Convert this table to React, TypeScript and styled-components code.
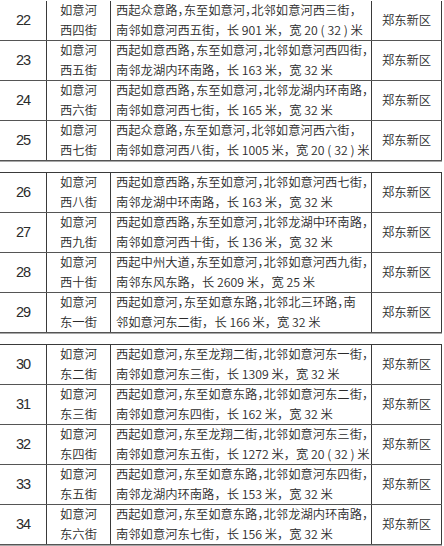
import React from 'react';
import styled, { createGlobalStyle } from 'styled-components';

const GlobalStyle = createGlobalStyle`
  html, body {
    margin: 0;
    padding: 0;
    background: #ffffff;
  }
  body {
    width: 444px;
    height: 546px;
    overflow: hidden;
    font-family: 'Noto Sans CJK SC', 'Noto Sans', sans-serif;
    color: #2b2b2b;
  }
`;

const Page = styled.div`
  display: flex;
  flex-direction: column;
  gap: 10px;
  margin-left: -1px;
  width: 443px;
`;

const Group = styled.div<{ $first?: boolean }>`
  display: flex;
  flex-direction: column;
  border-left: 1px solid #3a3a3a;
  border-top: 1px solid ${(p) => (p.$first ? 'transparent' : '#3a3a3a')};
  border-bottom: 1px solid #a8a8a8;
`;

const Row = styled.div`
  display: grid;
  grid-template-columns: 47px 64px 261px 70px;
  height: 40px;
  border-bottom: 1px solid #555;
  box-sizing: border-box;
`;

const Cell = styled.div<{ $align?: 'left' | 'center' }>`
  display: flex;
  flex-direction: column;
  justify-content: center;
  align-items: ${(p) => (p.$align === 'left' ? 'flex-start' : 'center')};
  padding-left: ${(p) => (p.$align === 'left' ? '5px' : '0')};
  border-right: 1px solid #3a3a3a;
  font-size: 12.3px;
  font-weight: 350;
  line-height: 19.5px;
  white-space: nowrap;
  overflow: hidden;
`;

const Num = styled.span`
  font-family: 'Liberation Sans', Arial, sans-serif;
  font-size: 14.5px;
  font-weight: 400;
  letter-spacing: -1px;
  padding-top: 1px;
`;

const Line = styled.span<{ $tight?: boolean }>`
  display: block;
  font-feature-settings: ${(p) => (p.$tight ? '"halt"' : 'normal')};
`;

type Road = {
  no: number;
  name: string;
  first: string;
  second: string;
};

const groups: Road[][] = [
  [
    { no: 22, name: '西四街', first: '西起众意路，东至如意河，北邻如意河西三街，', second: '南邻如意河西五街，长 901 米，宽 20 ( 32 ) 米' },
    { no: 23, name: '西五街', first: '西起如意西路，东至如意河，北邻如意河西四街，', second: '南邻龙湖内环南路，长 163 米，宽 32 米' },
    { no: 24, name: '西六街', first: '西起如意西路，东至如意河，北邻龙湖内环南路，', second: '南邻如意河西七街，长 165 米，宽 32 米' },
    { no: 25, name: '西七街', first: '西起众意路，东至如意河，北邻如意河西六街，', second: '南邻如意河西八街，长 1005 米，宽 20 ( 32 ) 米' },
  ],
  [
    { no: 26, name: '西八街', first: '西起如意西路，东至如意河，北邻如意河西七街，', second: '南邻龙湖中环南路，长 163 米，宽 32 米' },
    { no: 27, name: '西九街', first: '西起如意西路，东至如意河，北邻龙湖中环南路，', second: '南邻如意河西十街，长 136 米，宽 32 米' },
    { no: 28, name: '西十街', first: '西起中州大道，东至如意河，北邻如意河西九街，', second: '南邻东风东路，长 2609 米，宽 25 米' },
    { no: 29, name: '东一街', first: '西起如意河，东至如意东路，北邻北三环路，南', second: '邻如意河东二街，长 166 米，宽 32 米' },
  ],
  [
    { no: 30, name: '东二街', first: '西起如意河，东至龙翔二街，北邻如意河东一街，', second: '南邻如意河东三街，长 1309 米，宽 32 米' },
    { no: 31, name: '东三街', first: '西起如意河，东至如意东路，北邻如意河东二街，', second: '南邻如意河东四街，长 162 米，宽 32 米' },
    { no: 32, name: '东四街', first: '西起如意河，东至龙翔二街，北邻如意河东三街，', second: '南邻如意河东五街，长 1272 米，宽 20 ( 32 ) 米' },
    { no: 33, name: '东五街', first: '西起如意河，东至如意东路，北邻如意河东四街，', second: '南邻龙湖内环南路，长 153 米，宽 32 米' },
    { no: 34, name: '东六街', first: '西起如意河，东至如意东路，北邻龙湖内环南路，', second: '南邻如意河东七街，长 156 米，宽 32 米' },
  ],
];

const App: React.FC = () => (
  <>
    <GlobalStyle />
    <Page>
      {groups.map((rows, gi) => (
        <Group key={gi} $first={gi === 0}>
          {rows.map((r) => (
            <Row key={r.no}>
              <Cell>
                <Num>{r.no}</Num>
              </Cell>
              <Cell>
                <Line>如意河</Line>
                <Line>{r.name}</Line>
              </Cell>
              <Cell $align='left'>
                <Line $tight>{r.first}</Line>
                <Line>{r.second}</Line>
              </Cell>
              <Cell>郑东新区</Cell>
            </Row>
          ))}
        </Group>
      ))}
    </Page>
  </>
);

export default App;
